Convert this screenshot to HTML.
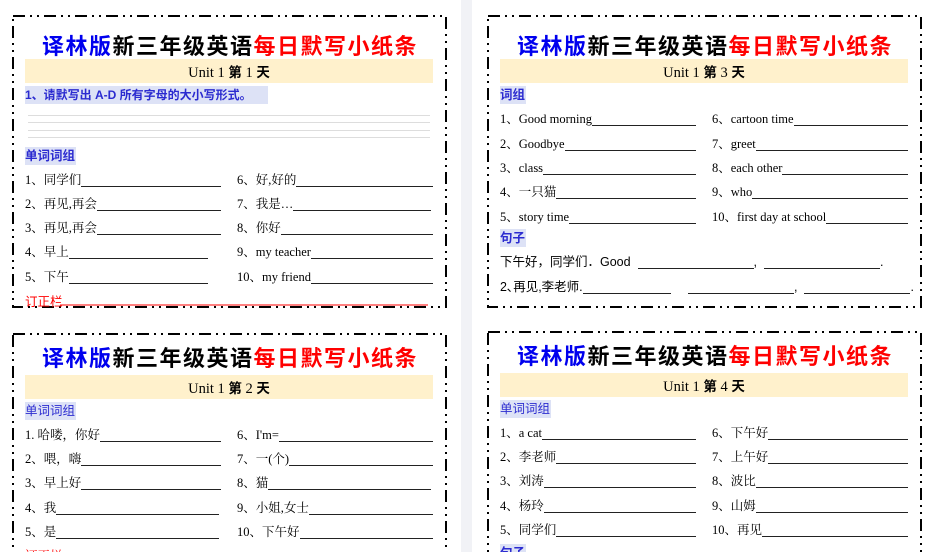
<!DOCTYPE html>
<html><head><meta charset="utf-8">
<style>
*{margin:0;padding:0;box-sizing:border-box}
html,body{width:934px;height:552px;overflow:hidden}
body{background:#fff;position:relative;font-family:"Liberation Serif","Noto Serif CJK SC",serif;font-size:12px;color:#000}
.strip{position:absolute;left:461px;top:0;width:11px;height:552px;background:#f1f2f6}
.a{position:absolute}
.title{position:absolute;width:434px;text-align:center;font-family:"Noto Sans CJK SC",sans-serif;font-weight:700;font-size:22px;letter-spacing:1.5px;line-height:26px;white-space:nowrap}
.b{color:#0000ee}.r{color:#ff0000}
.bar{position:absolute;width:408px;height:24px;background:#fff1cc;text-align:center;font-size:14.5px;line-height:25px;font-family:"Liberation Serif","Noto Sans CJK SC",serif}
.bar b{font-family:"Noto Sans CJK SC",sans-serif;font-weight:bold;font-size:13.5px}
.lab{position:absolute;height:18px;background:#dde2f6;color:#2b2bd0;font-weight:bold;font-size:12.5px;line-height:18px;font-family:"Liberation Sans","Noto Sans CJK SC",sans-serif;padding-right:1px}
.row{position:absolute;display:flex;align-items:flex-end;height:16px;white-space:nowrap;line-height:14px;font-size:12.5px}
.row i{flex:1;border-bottom:1px solid #222;height:14px;margin-left:0}
.gl{position:absolute;left:28px;width:402px;height:1px;background:#ddd}
</style></head><body>
<div class="strip"></div>

<svg class="a" style="left:0;top:0" width="934" height="552">
<g fill="none" stroke="#000" stroke-width="2" stroke-dasharray="12,5,2,5,2,5">
<rect x="13" y="16" width="433" height="291"/>
<rect x="488" y="16" width="433" height="291"/>
<rect x="13" y="334" width="433" height="240"/>
<rect x="488" y="332" width="433" height="240"/>
</g>
<line x1="60" y1="305" x2="428" y2="305" stroke="#f00" stroke-width="1"/>
</svg>

<!-- Card 1 -->
<div class="title" style="left:13px;top:32px"><span class="b">译林版</span>新三年级英语<span class="r">每日默写小纸条</span></div>
<div class="bar" style="left:25px;top:59px">Unit 1 <b>第</b> 1 <b>天</b></div>
<div class="lab" style="left:25px;top:86px;width:243px;font-size:12px">1、请默写出 A-D 所有字母的大小写形式。</div>
<div class="gl" style="top:115px"></div><div class="gl" style="top:122px"></div><div class="gl" style="top:130px"></div><div class="gl" style="top:137px"></div>
<div class="lab" style="left:25px;top:147px">单词词组</div>
<div class="row" style="left:25px;top:171px;width:196px">1、同学们<i></i></div>
<div class="row" style="left:25px;top:195px;width:196px">2、再见,再会<i></i></div>
<div class="row" style="left:25px;top:219px;width:196px">3、再见,再会<i></i></div>
<div class="row" style="left:25px;top:243px;width:183px">4、早上<i></i></div>
<div class="row" style="left:25px;top:268px;width:183px">5、下午<i></i></div>
<div class="row" style="left:237px;top:171px;width:196px">6、好,好的<i></i></div>
<div class="row" style="left:237px;top:195px;width:194px">7、我是…<i></i></div>
<div class="row" style="left:237px;top:219px;width:196px">8、你好<i></i></div>
<div class="row" style="left:237px;top:243px;width:196px">9、my teacher<i></i></div>
<div class="row" style="left:237px;top:268px;width:196px">10、my friend<i></i></div>
<div class="a r" style="left:25px;top:291px;font-size:12.5px;font-family:'Liberation Sans','Noto Sans CJK SC',sans-serif">订正栏</div>

<!-- Card 3 -->
<div class="title" style="left:488px;top:32px"><span class="b">译林版</span>新三年级英语<span class="r">每日默写小纸条</span></div>
<div class="bar" style="left:500px;top:59px">Unit 1 <b>第</b> 3 <b>天</b></div>
<div class="lab" style="left:500px;top:86px">词组</div>
<div class="row" style="left:500px;top:110px;width:196px">1、Good morning<i></i></div>
<div class="row" style="left:500px;top:135px;width:196px">2、Goodbye<i></i></div>
<div class="row" style="left:500px;top:159px;width:196px">3、class<i></i></div>
<div class="row" style="left:500px;top:183px;width:196px">4、一只猫<i></i></div>
<div class="row" style="left:500px;top:208px;width:196px">5、story time<i></i></div>
<div class="row" style="left:712px;top:110px;width:196px">6、cartoon time<i></i></div>
<div class="row" style="left:712px;top:135px;width:196px">7、greet<i></i></div>
<div class="row" style="left:712px;top:159px;width:196px">8、each other<i></i></div>
<div class="row" style="left:712px;top:183px;width:196px">9、who<i></i></div>
<div class="row" style="left:712px;top:208px;width:196px">10、first day at school<i></i></div>
<div class="lab" style="left:500px;top:229px">句子</div>
<div class="row" style="left:500px;top:253px;width:380px;font-family:'Liberation Sans','Noto Sans CJK SC',sans-serif">下午好，同学们．Good&nbsp;&nbsp;<i style="flex:0 0 116px"></i>,&nbsp;&nbsp;<i style="flex:0 0 116px"></i>.</div>
<div class="row" style="left:500px;top:278px;width:410px;font-family:'Liberation Sans','Noto Sans CJK SC',sans-serif">2､再见,李老师.<i style="flex:0 0 88px"></i>&nbsp;&nbsp;&nbsp;&nbsp;&nbsp;<i style="flex:0 0 106px"></i>,&nbsp;&nbsp;<i style="flex:0 0 106px"></i>.</div>

<!-- Card 2 -->
<div class="title" style="left:13px;top:344px"><span class="b">译林版</span>新三年级英语<span class="r">每日默写小纸条</span></div>
<div class="bar" style="left:25px;top:375px">Unit 1 <b>第</b> 2 <b>天</b></div>
<div class="lab" style="left:25px;top:402px;font-weight:normal">单词词组</div>
<div class="row" style="left:25px;top:426px;width:196px">1. 哈喽，你好<i></i></div>
<div class="row" style="left:25px;top:450px;width:196px">2、喂，嗨<i></i></div>
<div class="row" style="left:25px;top:474px;width:196px">3、早上好<i></i></div>
<div class="row" style="left:25px;top:499px;width:194px">4、我<i></i></div>
<div class="row" style="left:25px;top:523px;width:194px">5、是<i></i></div>
<div class="row" style="left:237px;top:426px;width:196px">6、I'm=<i></i></div>
<div class="row" style="left:237px;top:450px;width:196px">7、一(个)<i></i></div>
<div class="row" style="left:237px;top:474px;width:194px">8、猫<i></i></div>
<div class="row" style="left:237px;top:499px;width:196px">9、小姐,女士<i></i></div>
<div class="row" style="left:237px;top:523px;width:196px">10、下午好<i></i></div>
<div class="a r" style="left:25px;top:546px;font-size:12.5px">订正栏</div>

<!-- Card 4 -->
<div class="title" style="left:488px;top:342px"><span class="b">译林版</span>新三年级英语<span class="r">每日默写小纸条</span></div>
<div class="bar" style="left:500px;top:373px">Unit 1 <b>第</b> 4 <b>天</b></div>
<div class="lab" style="left:500px;top:400px;font-weight:normal">单词词组</div>
<div class="row" style="left:500px;top:424px;width:196px">1、a cat<i></i></div>
<div class="row" style="left:500px;top:448px;width:196px">2、李老师<i></i></div>
<div class="row" style="left:500px;top:472px;width:196px">3、刘涛<i></i></div>
<div class="row" style="left:500px;top:497px;width:196px">4、杨玲<i></i></div>
<div class="row" style="left:500px;top:521px;width:196px">5、同学们<i></i></div>
<div class="row" style="left:712px;top:424px;width:196px">6、下午好<i></i></div>
<div class="row" style="left:712px;top:448px;width:196px">7、上午好<i></i></div>
<div class="row" style="left:712px;top:472px;width:196px">8、波比<i></i></div>
<div class="row" style="left:712px;top:497px;width:196px">9、山姆<i></i></div>
<div class="row" style="left:712px;top:521px;width:196px">10、再见<i></i></div>
<div class="lab" style="left:500px;top:544px">句子</div>
</body></html>
